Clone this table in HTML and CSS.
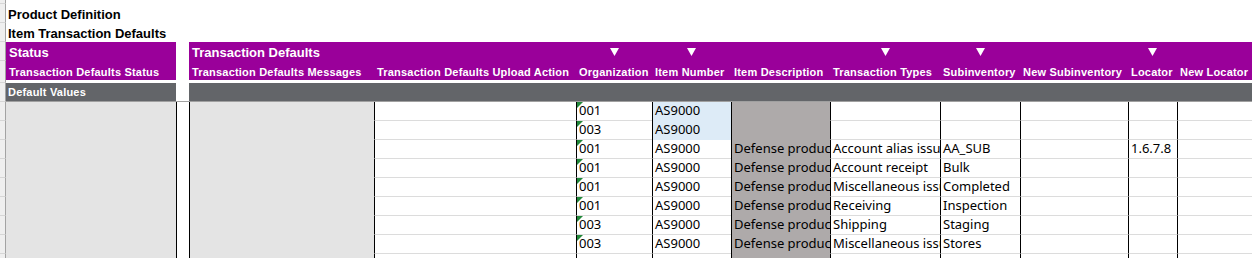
FILE: index.html
```html
<!DOCTYPE html>
<html lang="en">
<head>
<meta charset="utf-8">
<title>Item Transaction Defaults</title>
<link rel="stylesheet" href="styles.css">
</head>
<body>
<div class="sheet">
  <div class="row r-top"><div class="gut"></div><div class="blank"></div></div>
  <div class="row"><div class="gut"></div><div class="title">Product Definition</div></div>
  <div class="row"><div class="gut"></div><div class="title">Item Transaction Defaults</div></div>

  <div class="row r-group">
    <div class="gut"></div>
    <div class="c">Status</div>
    <div class="c sep"></div>
    <div class="c wide">Transaction Defaults</div>
    <div class="c arrow"><svg width="9" height="8" viewBox="0 0 9 8"><polygon points="0,0 9,0 4.5,8" fill="#fff"/></svg></div>
    <div class="c arrow"><svg width="9" height="8" viewBox="0 0 9 8"><polygon points="0,0 9,0 4.5,8" fill="#fff"/></svg></div>
    <div class="c"></div>
    <div class="c arrow"><svg width="9" height="8" viewBox="0 0 9 8"><polygon points="0,0 9,0 4.5,8" fill="#fff"/></svg></div>
    <div class="c arrow"><svg width="9" height="8" viewBox="0 0 9 8"><polygon points="0,0 9,0 4.5,8" fill="#fff"/></svg></div>
    <div class="c"></div>
    <div class="c arrow"><svg width="9" height="8" viewBox="0 0 9 8"><polygon points="0,0 9,0 4.5,8" fill="#fff"/></svg></div>
    <div class="c"></div>
  </div>

  <div class="row r-label">
    <div class="gut"></div>
    <div class="c">Transaction Defaults Status</div>
    <div class="c sep"></div>
    <div class="c">Transaction Defaults Messages</div>
    <div class="c">Transaction Defaults Upload Action</div>
    <div class="c">Organization</div>
    <div class="c">Item Number</div>
    <div class="c">Item Description</div>
    <div class="c">Transaction Types</div>
    <div class="c">Subinventory</div>
    <div class="c">New Subinventory</div>
    <div class="c">Locator</div>
    <div class="c">New Locator</div>
  </div>

  <div class="row r-band">
    <div class="gut"></div>
    <div class="c">Default Values</div>
    <div class="c sep"></div>
    <div class="c"></div><div class="c"></div><div class="c"></div><div class="c"></div>
    <div class="c"></div><div class="c"></div><div class="c"></div><div class="c"></div>
    <div class="c"></div><div class="c"></div>
  </div>

  <div class="row r-data">
    <div class="gut"></div><div class="d a"></div><div class="d b"></div><div class="d m"></div><div class="d"></div>
    <div class="d org">001</div><div class="d blue">AS9000</div><div class="d desc"></div>
    <div class="d"></div><div class="d"></div><div class="d"></div><div class="d"></div><div class="d"></div>
  </div>
  <div class="row r-data">
    <div class="gut"></div><div class="d a"></div><div class="d b"></div><div class="d m"></div><div class="d"></div>
    <div class="d org">003</div><div class="d blue">AS9000</div><div class="d desc"></div>
    <div class="d"></div><div class="d"></div><div class="d"></div><div class="d"></div><div class="d"></div>
  </div>
  <div class="row r-data">
    <div class="gut"></div><div class="d a"></div><div class="d b"></div><div class="d m"></div><div class="d"></div>
    <div class="d org">001</div><div class="d">AS9000</div><div class="d desc">Defense product</div>
    <div class="d">Account alias issue</div><div class="d">AA_SUB</div><div class="d"></div><div class="d">1.6.7.8</div><div class="d"></div>
  </div>
  <div class="row r-data">
    <div class="gut"></div><div class="d a"></div><div class="d b"></div><div class="d m"></div><div class="d"></div>
    <div class="d org">001</div><div class="d">AS9000</div><div class="d desc">Defense product</div>
    <div class="d">Account receipt</div><div class="d">Bulk</div><div class="d"></div><div class="d"></div><div class="d"></div>
  </div>
  <div class="row r-data">
    <div class="gut"></div><div class="d a"></div><div class="d b"></div><div class="d m"></div><div class="d"></div>
    <div class="d org">001</div><div class="d">AS9000</div><div class="d desc">Defense product</div>
    <div class="d">Miscellaneous issue</div><div class="d">Completed</div><div class="d"></div><div class="d"></div><div class="d"></div>
  </div>
  <div class="row r-data">
    <div class="gut"></div><div class="d a"></div><div class="d b"></div><div class="d m"></div><div class="d"></div>
    <div class="d org">001</div><div class="d">AS9000</div><div class="d desc">Defense product</div>
    <div class="d">Receiving</div><div class="d">Inspection</div><div class="d"></div><div class="d"></div><div class="d"></div>
  </div>
  <div class="row r-data">
    <div class="gut"></div><div class="d a"></div><div class="d b"></div><div class="d m"></div><div class="d"></div>
    <div class="d org">003</div><div class="d">AS9000</div><div class="d desc">Defense product</div>
    <div class="d">Shipping</div><div class="d">Staging</div><div class="d"></div><div class="d"></div><div class="d"></div>
  </div>
  <div class="row r-data">
    <div class="gut"></div><div class="d a"></div><div class="d b"></div><div class="d m"></div><div class="d"></div>
    <div class="d org">003</div><div class="d">AS9000</div><div class="d desc">Defense product</div>
    <div class="d">Miscellaneous issue</div><div class="d">Stores</div><div class="d"></div><div class="d"></div><div class="d"></div>
  </div>
  <div class="row r-data">
    <div class="gut"></div><div class="d a"></div><div class="d b"></div><div class="d m"></div><div class="d"></div>
    <div class="d"></div><div class="d"></div><div class="d desc"></div>
    <div class="d"></div><div class="d"></div><div class="d"></div><div class="d"></div><div class="d"></div>
  </div>
</div>
</body>
</html>
```

FILE: styles.css
```css
:root {
  --cols: 6px 170px 13px 185px 202px 76px 79px 99px 110px 80px 108px 49px 75px;
  --purple: #9a009a;
  --band: #636569;
}

html, body {
  margin: 0;
  padding: 0;
  overflow: hidden;
  background: #fff;
}

body {
  font-family: "Liberation Sans", Arial, sans-serif;
  color: #000;
}

.sheet {
  width: 1252px;
}

.row {
  display: grid;
  grid-template-columns: var(--cols);
  height: 19px;
}

.row > div {
  box-sizing: border-box;
  min-width: 0;
  white-space: nowrap;
  overflow: hidden;
}

.gut {
  background: #efefef;
  border-right: 1px solid #a3a3a3;
  border-bottom: 1px solid #d6d6d6;
}

.r-top {
  height: 4px;
}

.blank,
.title {
  grid-column: 2 / -1;
}

.title {
  font-size: 13px;
  font-weight: 700;
  line-height: 15px;
  padding: 3px 0 0 2px;
}

/* purple header rows */
.r-group .c,
.r-label .c {
  background: var(--purple);
  color: #fff;
  font-weight: 700;
}

.r-group .c {
  font-size: 13px;
  line-height: 15px;
  padding: 3px 0 0 3px;
}

.r-group .wide {
  grid-column: span 2;
}

.r-group .arrow {
  display: flex;
  justify-content: center;
  align-items: flex-start;
  padding: 6px 0 0 0;
}

.r-label {
  height: 22px;
}

.r-label .c {
  font-size: 11px;
  line-height: 13px;
  padding: 5px 0 0 3px;
  letter-spacing: 0.2px;
  border-bottom: 3px solid #fff;
}

/* dark band */
.r-band .c {
  background: var(--band);
  color: #fff;
  font-size: 11px;
  font-weight: 700;
  line-height: 13px;
  padding: 3px 0 0 2px;
  letter-spacing: 0.2px;
  border-bottom: 1px solid #a0a0a0;
}

.row .c.sep {
  background: #fff;
}

/* data cells */
.d {
  font-family: "Noto Sans", "Liberation Sans", sans-serif;
  font-size: 13px;
  line-height: 17px;
  padding-left: 2px;
  border-left: 1px solid #000;
  border-bottom: 1px solid #dcdcdc;
}

.d.a {
  background: #e4e4e4;
  border-left: none;
  border-bottom: none;
}

.d.b {
  background: #fff;
  border-bottom: none;
}

.d.m {
  background: #e4e4e4;
  border-bottom: none;
}

.d.desc {
  background: #aeaaaa;
  border-bottom: none;
}

.d.blue {
  background: #ddebf7;
  border-bottom: none;
}

.d.org {
  position: relative;
}

.d.org::before {
  content: "";
  position: absolute;
  left: 0;
  top: 0;
  width: 0;
  height: 0;
  border-top: 6px solid #22883a;
  border-right: 6px solid transparent;
}
```
